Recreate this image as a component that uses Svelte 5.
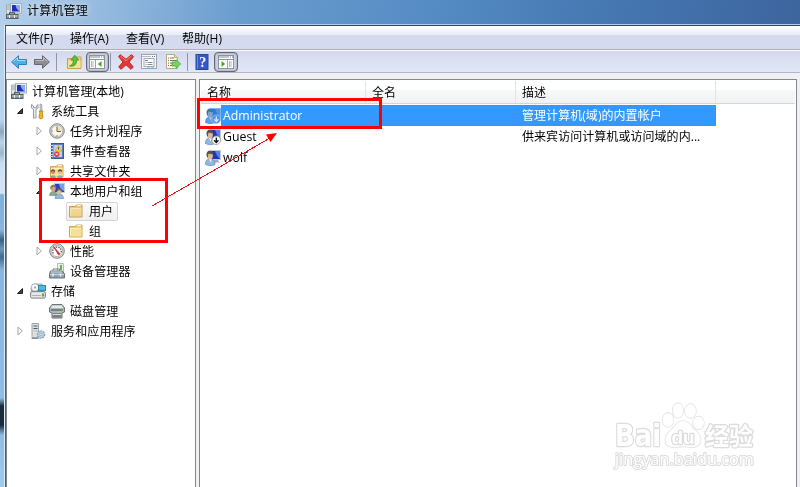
<script>
  const menus = [
    { t: '文件(F)', w: 54 },
    { t: '操作(A)', w: 56 },
    { t: '查看(V)', w: 56 },
    { t: '帮助(H)', w: 60 }
  ];
  const tree = [
    { t: '计算机管理(本地)', i: 'computer', l: 0 },
    { t: '系统工具', i: 'tools', l: 1, e: 'open' },
    { t: '任务计划程序', i: 'clock', l: 2, e: 'shut' },
    { t: '事件查看器', i: 'event', l: 2, e: 'shut' },
    { t: '共享文件夹', i: 'share', l: 2, e: 'shut' },
    { t: '本地用户和组', i: 'users', l: 2, e: 'open' },
    { t: '用户', i: 'folder', l: 3, sel: true },
    { t: '组', i: 'folder', l: 3 },
    { t: '性能', i: 'perf', l: 2, e: 'shut' },
    { t: '设备管理器', i: 'device', l: 2 },
    { t: '存储', i: 'storage', l: 1, e: 'open' },
    { t: '磁盘管理', i: 'disk', l: 2 },
    { t: '服务和应用程序', i: 'service', l: 1, e: 'shut' }
  ];
  const rows = [
    { n: 'Administrator', d: '管理计算机(域)的内置帐户', i: 'userdown', sel: true },
    { n: 'Guest', d: '供来宾访问计算机或访问域的内...', i: 'userdown' },
    { n: 'wolf', d: '', i: 'user' }
  ];
</script>

{#snippet person(sel)}
  <rect x="5" y=".5" width="10.500" height="9" fill={sel ? '#2f78dc' : '#1b35c4'} stroke={sel ? '#7db2ee' : '#c3c9d2'} />
  <path d="M10 1h5v7.500c-2-1-4-4-5-7.500z" fill={sel ? '#4c93ea' : '#5b7cf0'} />
  <path d="M9 10h4l1.500 2.500H8z" fill={sel ? '#6ba4e4' : '#a4abb4'} />
  <path d="M0.500 14.500c0-4 1.500-5.500 4.500-5.500s5 1.500 5 5.500c-2 1.500-7 1.500-9.500 0z" fill={sel ? '#5c9fe8' : '#8fb8e4'} stroke={sel ? '#3f7fc8' : '#4d7db8'} stroke-width=".6" />
  <path d="M3.500 8.500h3.200l-.8 4z" fill={sel ? '#b4c9e4' : '#f6efe6'} />
  <ellipse cx="5" cy="5.500" rx="2.900" ry="3.900" fill={sel ? '#83a5cb' : '#dfb790'} />
  <path d="M1.700 6C1 2 3 .6 5 .8c2.500 0 3.300 1.700 3 3.500C6 4.500 4 3.200 3.300 4.200 3 5 3.200 7 2.500 8z" fill={sel ? '#3f74ad' : '#5a5145'} />
{/snippet}

{#snippet icon(name, sel = false)}
  <svg class="icon" width="16" height="16" viewBox="0 0 16 16">
    {#if name === 'computer'}
      <rect x="4.500" y=".5" width="11" height="9.500" fill="#e6e9ee" stroke="#a9b1bc" />
      <rect x="6" y="2" width="8" height="6.500" fill="#1a2fbe" />
      <path d="M9.500 2H14v6.500c-2.500-1-4-3.500-4.500-6.500z" fill="#8aa8f4" />
      <path d="M.5 2h3.500v9H.5z" fill="#e3e6e9" stroke="#98a1a8" stroke-width=".8" />
      <path d="M1 4h2.500M1 6h2.500" stroke="#9ba2a8" />
      <path d="M8 10.500h4.500l1 1.500H8z" fill="#bac1c6" />
      <path d="M3.500 11.500V9.700h5v1.800" fill="none" stroke="#3d464a" />
      <rect x=".5" y="11.500" width="11.500" height="4" fill="#7d898f" stroke="#566268" />
      <path d="M1 13h11" stroke="#c3ccd0" /><path d="M3.500 12v3M8.500 12v3" stroke="#eef1f2" />
    {:else if name === 'tools'}
      <path d="M1.500 1.500v3.500l2 1.500V15h2.500V6.500L8 5V1.500L6.300 3v1.700H3.500V3z" fill="#e9ecee" stroke="#8b9399" stroke-width=".9" />
      <path d="M10 1l1.800.5v6h-1.500z" fill="#d3d9dd" stroke="#868f95" stroke-width=".7" />
      <path d="M9.200 8h3.800l-.8 2 .8 4-1 1.700H9.800L8.900 14l1-4z" fill="#f4b91d" stroke="#b97a08" stroke-width=".8" />
    {:else if name === 'clock'}
      <circle cx="8" cy="8" r="7.300" fill="#c9ccce" stroke="#7d8286" stroke-width=".9" />
      <circle cx="8" cy="8" r="5.600" fill="#fdf7e4" stroke="#a4a7aa" stroke-width=".7" />
      <path d="M8 8V2.500A5.500 5.500 0 0 1 13.500 8z" fill="#f6dfae" />
      <path d="M8 3.500V8.500h4" fill="none" stroke="#5b5f63" />
      <path d="M3 8h1M8 12v1" stroke="#888" />
    {:else if name === 'event'}
      <rect x="2.500" y=".5" width="12" height="15" fill="#5d7fbb" stroke="#3a5a92" />
      <rect x="4.500" y="2" width="8.500" height="12" fill="#bccce6" />
      <path d="M1 2.500h3M1 5.500h3M1 8.500h3M1 11.500h3M1 13.500h3" stroke="#d1d8e4" />
      <path d="M9.500 2.500l3.300 5.500H6.200z" fill="#ffd93e" stroke="#c79c18" stroke-width=".6" />
      <path d="M9.500 4.300v2.200" stroke="#444" />
      <circle cx="7.700" cy="11.200" r="2.700" fill="#d94540" />
      <path d="M6.700 10.200l2 2m0-2l-2 2" stroke="#fff" stroke-width=".9" />
    {:else if name === 'folder' || name === 'share'}
      <path d="M1.500 3.500h6l1-1.500h5.500v12H1.500z" fill="#f0cd78" stroke="#cfa652" />
      <path d="M9 2.500h4" stroke="#fff5d0" />
      <path d="M2 5h11.500v8.500H2z" fill="#f9df95" />
      <path d="M2.500 5.500h10.500M2.500 5.500V13" fill="none" stroke="#fff0bb" />
      {#if name === 'share'}
        <path d="M1 15.500c0-4.500 6-4.500 6 0z" fill="#78b0a0" /><circle cx="4" cy="9" r="2.100" fill="#c98d5c" />
        <path d="M1.700 9c0-3.600 4.600-3.600 4.600 0L4 7.800z" fill="#6b4d38" />
        <path d="M8 15.500c0-4.500 6-4.500 6 0z" fill="#70b3cc" /><circle cx="11" cy="9" r="2.100" fill="#e3b68c" />
        <path d="M8.700 9c0-3.600 4.600-3.600 4.600 0L11 7.800z" fill="#4f463e" />
      {/if}
    {:else if name === 'users'}
      <rect x="5.500" y=".5" width="10" height="9" fill="#263ed0" stroke="#c3cad8" />
      <path d="M10 1h5v7c-3-1-4.500-4-5-7z" fill="#7c9cf4" />
      <path d="M.5 12.500c0-5.500 7-5.500 8 0z" fill="#86aa8b" stroke="#5f8271" stroke-width=".5" />
      <ellipse cx="4.300" cy="5" rx="2.500" ry="3.300" fill="#d3a177" />
      <path d="M1.300 6.500C.3.500 8 .5 7.300 5L4 3.500z" fill="#8a7358" />
      <path d="M6 15.500c0-6.500 8-6.500 8.700 0z" fill="#8fbbe0" stroke="#4b7ea8" stroke-width=".5" />
      <ellipse cx="10.300" cy="8.300" rx="2.300" ry="3" fill="#e5b98f" />
      <path d="M7.500 9C6.700 3.800 13.500 3.800 13 8.500L10 6.700z" fill="#665a4b" />
    {:else if name === 'perf'}
      <circle cx="8" cy="8" r="7.300" fill="#dadada" stroke="#74797b" stroke-width=".9" />
      <circle cx="8" cy="8" r="5.600" fill="#fff" stroke="#999" stroke-width=".6" />
      <path d="M4.300 10.500A4.300 4.300 0 1 1 11.700 10.500" fill="none" stroke="#59666a" stroke-width="1.400" stroke-dasharray="1.500 1" />
      <path d="M4.500 3.500l5 8.500 1.500-1z" fill="#e82924" stroke="#c9211c" stroke-width=".7" />
    {:else if name === 'device'}
      <path d="M8.500 .5h6v8h-6z" fill="#edf0ee" stroke="#b5bcb8" /><path d="M12 2v5" stroke="#5fb350" stroke-width="2" />
      <path d="M4 7.500V6h6.500v1.500" fill="none" stroke="#6d7d89" />
      <path d="M1.500 8h12l2 3v4H.5v-4z" fill="#8fa1ad" stroke="#647581" />
      <path d="M2 9h11M1 11.500h14" stroke="#ccd7dd" /><path d="M4 10.500v3M11.500 10.500v3" stroke="#eef3f6" stroke-width="1.500" />
    {:else if name === 'storage'}
      <path d="M1 5l3-4h8l3 4v3H1z" fill="#d0d5d6" stroke="#8f9597" stroke-width=".7" />
      <circle cx="5" cy="4.500" r="3.800" fill="#f2f5f5" stroke="#909b9d" stroke-width=".7" /><circle cx="5" cy="4.500" r="1" fill="#8ba0a6" />
      <rect x="8.500" y="2.500" width="7" height="5" fill="#4bb8e8" stroke="#2e88ae" />
      <rect x=".6" y="8.600" width="14.800" height="6.500" rx="1.500" fill="#e5e7e6" stroke="#777d7e" />
      <path d="M2 12.500h9" stroke="#aeb3b3" /><rect x="12" y="10.500" width="2" height="3" fill="#43b528" />
    {:else if name === 'disk'}
      <path d="M.5 5L3 1.500h10L15.500 5v4L13 10v5H3v-5L.5 9z" fill="#b1b6b7" stroke="#6b7273" />
      <path d="M3 2.500h10l1 2.500H2z" fill="#e6e9e9" /><path d="M2 7h10" stroke="#62696a" stroke-width="1.400" />
      <rect x="12" y="6" width="2" height="2" fill="#47b72d" />
      <path d="M4 10h8v4.500H4z" fill="#7b8182" /><path d="M4 11.500h8" stroke="#dce1e2" />
    {:else if name === 'service'}
      <path d="M2 .5h6.500v14H2z" fill="#dce0e2" stroke="#9ca3a7" />
      <path d="M3.500 3h4M3.500 5.500h4" stroke="#4f585c" /><path d="M3.500 8h4" stroke="#b0b7ba" />
      <path d="M1.500 15.500h7" stroke="#868f94" />
      <circle cx="11" cy="11.500" r="3.500" fill="#a8c2d7" stroke="#7c9db7" stroke-width="1.600" stroke-dasharray="1.600 1" />
      <circle cx="11" cy="11.500" r="3" fill="#b9d0e2" /><circle cx="11" cy="11.500" r="1.200" fill="#fff" stroke="#7190a6" stroke-width=".6" />
    {:else if name === 'userdown'}
      {@render person(sel)}
      <circle cx="11.300" cy="11.200" r="4.300" fill={sel ? '#4a92dd' : '#fff'} stroke={sel ? '#a4c8f0' : '#8d8d8d'} stroke-width=".8" />
      <path d="M11.300 8.500v5M9.100 11.300l2.200 2.200 2.200-2.200" fill="none" stroke={sel ? '#d7eaff' : '#111'} stroke-width="1.300" />
    {:else if name === 'user'}
      {@render person(sel)}
    {:else if name === 'back' || name === 'forward'}
      {@const b = name === 'back'}
      <g transform={b ? '' : 'translate(16 0) scale(-1 1)'}>
        <path d="M.6 8L7.500 1.700V5.500h8v5h-8v3.800z" fill={b ? '#45b2ee' : '#8d8f93'} stroke={b ? '#2a80bb' : '#66686c'} />
        <path d="M2.300 7.500L6.500 3.700V6.500h8" fill="none" stroke={b ? '#a3e1fc' : '#bcbec1'} />
      </g>
    {:else if name === 'up'}
      <path d="M1.500 4.500h5l1-1.500H15v11.500H1.500z" fill="#f2ce72" stroke="#cba04a" />
      <path d="M2 7h12.500v7H2z" fill="#f9e09a" />
      <path d="M3.500 12c3-1 4-3 3.800-6H5l3.800-4.800L12.500 6h-2c.5 4-2 7-7 6z" fill="#5bc43c" stroke="#35912a" stroke-width=".8" />
    {:else if name === 'paneleft' || name === 'paneright'}
      <rect x=".5" y="1.500" width="15" height="13" fill="#fff" stroke="#8a939c" />
      <path d="M1 3h10" stroke="#7f8993" /><path d="M12 3h3" stroke="#68737e" stroke-dasharray="1 1" />
      <path d="M1 5.500h14" stroke="#8a939c" />
      {#if name === 'paneleft'}
        <path d="M6.500 6v8" stroke="#9aa3ac" /><path d="M2 8h3M2 10h3M2 12h3" stroke="#68737e" stroke-dasharray="1 .5" />
        <path d="M12.500 7v6L8.800 10z" fill="#3dab2b" />
      {:else}
        <path d="M9.500 6v8" stroke="#9aa3ac" /><path d="M11 8h3M11 10h3M11 12h3" stroke="#68737e" stroke-dasharray="1 .5" />
        <path d="M3.500 7v6L7.200 10z" fill="#3dab2b" />
      {/if}
    {:else if name === 'delete'}
      <path d="M2.200.7L8 5.300 13.500.7l2 2L11 8l4.300 5-2.300 2.300L8 10.800 3 15.300.7 13 5 8 .7 2.700z" fill="#e53a35" stroke="#b52424" />
      <path d="M2.500 2l5.500 4.700L13.300 2" fill="none" stroke="#ff857a" />
    {:else if name === 'props'}
      <rect x=".5" y=".5" width="15" height="14" fill="#f9fafb" stroke="#9aa3ab" />
      <path d="M1 2.500h9" stroke="#b3bac2" /><path d="M11 2.500h4" stroke="#66717b" stroke-dasharray="1 1" />
      <rect x="3" y="4.500" width="10" height="8" fill="#fff" stroke="#a2abb4" />
      <path d="M4 6.500h3" stroke="#727d87" /><path d="M4.500 8.500h1m1 0h5M4.500 10.500h1m1 0h5" stroke="#84909a" />
      <path d="M6 14h3m1 0h3" stroke="#3ebfea" />
    {:else if name === 'export'}
      <path d="M1.500.5h8l3 3v11h-11z" fill="#fffbe6" stroke="#b5aa82" />
      <path d="M9.500.5v3h3" fill="#eee2ad" stroke="#b5aa82" />
      <path d="M3 4h1m1 0h4M3 6.500h1m1 0h6M3 9h1m1 0h3M3 11.500h1m1 0h3" stroke="#75746d" />
      <path d="M7 8h4V5.700L15.700 10 11 14.200V12H7z" fill="#78d758" stroke="#4aa838" stroke-width=".8" />
    {:else if name === 'help'}
      <rect x="2" y=".5" width="12" height="15" fill="#3459ca" stroke="#2a459c" />
      <path d="M3.500 1v14" stroke="#6d8ce0" />
      <text x="8.800" y="13" text-anchor="middle" class="q">?</text>
    {/if}
  </svg>
{/snippet}

<main>
  <header>{@render icon('computer')}<span>计算机管理</span></header>
  <div class="shell">
    <div class="glass"></div>
    <section class="window">
      <nav>
        {#each menus as m}<span style:width="{m.w}px">{m.t}</span>{/each}
      </nav>
      <div class="toolbar">
        <span class="tool arrow">{@render icon('back')}</span>
        <span class="tool fwd">{@render icon('forward')}</span>
        <i></i>
        <span class="tool up">{@render icon('up')}</span>
        <span class="tool pressed">{@render icon('paneleft')}</span>
        <i class="tight"></i>
        <span class="tool">{@render icon('delete')}</span>
        <span class="tool">{@render icon('props')}</span>
        <span class="tool">{@render icon('export')}</span>
        <i class="last"></i>
        <span class="tool help">{@render icon('help')}</span>
        <span class="tool pressed">{@render icon('paneright')}</span>
      </div>
      <div class="body">
        <aside>
          {#each tree as n}
            <div class="node l{n.l}">
              <span class="exp">
                {#if n.e}
                  <svg width="8" height="10" viewBox="0 0 8 10">
                    {#if n.e === 'open'}<path d="M6.500 2.500v5h-5z" fill="#404040" stroke="#222" />
                    {:else}<path d="M2 1L6.300 5 2 9z" fill="#fff" stroke="#a6a6a6" />{/if}
                  </svg>
                {/if}
              </span>
              {@render icon(n.i)}
              <span class="label" class:sel={n.sel}>{n.t}</span>
            </div>
          {/each}
        </aside>
        <div class="list">
          <div class="head"><span>名称</span><span>全名</span><span>描述</span><span></span></div>
          {#each rows as r}
            <div class="row" class:chosen={r.sel}>
              <div class="ic">{@render icon(r.i, r.sel)}</div>
              <div class="cells"><span class="name">{r.n}</span><span class="desc">{r.d}</span></div>
            </div>
          {/each}
        </div>
      </div>
    </section>
  </div>

  <svg class="notes" width="800" height="487" viewBox="0 0 800 487">
    <rect x="40.500" y="179.500" width="126" height="62" />
    <rect x="198.500" y="99.500" width="182" height="28" />
    <path d="M152 206L270 138" class="thin" shape-rendering="crispEdges" />
    <path d="M277 133l-6.500 9-4.500-7.500z" class="tip" />
  </svg>

  <svg class="mark" width="150" height="76" viewBox="0 0 150 76">
    <g class="outline">
      <text x="2" y="45" class="brand" textLength="46" lengthAdjust="spacingAndGlyphs">Bai</text>
      <g class="paw">
        <ellipse cx="55" cy="19" rx="5.500" ry="7" /><ellipse cx="65" cy="9.500" rx="5.300" ry="7.300" />
        <ellipse cx="77.500" cy="10" rx="5.500" ry="7" /><ellipse cx="85.500" cy="22" rx="5.500" ry="6.500" />
        <path d="M70 20c7 0 9 7 13 10 7 6 6 15-2 16-4 .5-7-.5-11-.5s-7 1-11 .5c-8-1-9-10-2-16 4-3 6-10 13-10z" />
      </g>
      <text x="58.500" y="43" class="du" textLength="23" lengthAdjust="spacingAndGlyphs">du</text>
      <text x="92" y="44" class="cn">经验</text>
      <text x="2" y="64" class="url" textLength="139" lengthAdjust="spacingAndGlyphs">jingyan.baidu.com</text>
    </g>
  </svg>
</main>

<style>
  main {
    position: relative; width: 800px; height: 487px; overflow: hidden;
    display: flex; flex-direction: column;
    font: 12px/20px "Open Sans", "Noto Sans CJK SC", sans-serif; color: #000;
  }
  span { white-space: nowrap; }
  .icon { display: block; flex: none; overflow: visible; }
  header {
    box-sizing: border-box; height: 25px; flex: none; display: flex; align-items: center; gap: 5px; padding: 0 0 2px 6px;
    border-bottom: 1px solid #b6cce3;
    background: linear-gradient(100deg, #b6d1ea 0, #92b8de 14%, #6a9dcf 30%, #548bc3 55%, #4678b2 75%, #3d659e 100%);
  }
  header span { letter-spacing: .2px; text-shadow: 0 0 5px #fff8, 0 0 8px #fff6; }
  .shell { flex: 1; display: flex; min-height: 0; }
  .glass {
    width: 4px; flex: none; border-right: 1px solid #dcecf8;
    background: linear-gradient(180deg, #b4d0ea 0, #b9d5ee 95px, #8ea6bd 107px, #bcd5ea 117px, #9db4c9 128px, #c9dff1 138px, #d3e5f4 168px, #7fb0dd 170px, #86b5e0 205px, #3c5f84 215px, #6b96c0 224px, #45698f 232px, #86b5e0 245px, #8ebde7 373px, #1c2b3a 381px, #1c2b3a 400px, #8dbde8 410px, #a0c9ee 100%);
  }
  .window { flex: 1; min-width: 0; display: flex; flex-direction: column; background: #f0f0f0; border-left: 1px solid #4c5b6d; border-top: 1px solid #2f4562; }
  nav {
    box-sizing: border-box; height: 24px; flex: none; display: flex; padding: 3px 0 0 10px; border-bottom: 1px solid #b0b0b4;
    background: linear-gradient(180deg, #fff 0, #e6ebf5 9px, #d4daed 9px, #d5dbee 100%);
  }
  nav span { flex: none; }
  .toolbar {
    box-sizing: border-box; height: 23px; flex: none; display: flex; align-items: center; padding: 1px 0 0 5px;
    border-top: 1px solid #fafafc; border-bottom: 1px solid #b1b9c9;
    background: linear-gradient(180deg, #d3d9ec, #e3e8f8);
  }
  .tool { box-sizing: border-box; width: 23.500px; height: 20px; display: flex; align-items: center; justify-content: center; flex: none; }
  .arrow { width: 16px; } .fwd { width: 16px; margin-left: 7px; }
  .toolbar i { width: 1px; height: 18px; background: #8e97a7; margin: 0 5px 0 6px; }
  .toolbar i.tight { margin: 0 3px 0 1px; }
  .toolbar i.last { margin: 0 3px 0 2px; }
  .pressed { border: 1.500px solid #626975; border-radius: 4px; background: #cdd2df; box-shadow: inset 0 0 2px #7b8290; }
  .body { flex: 1; min-height: 0; display: flex; gap: 3px; padding: 6px 3px 0 0; }
  aside { box-sizing: border-box; width: 190px; flex: none; background: #fff; border: 1px solid #828790; border-bottom: 0; padding-top: 1px; }
  .node { height: 20px; display: flex; align-items: center; }
  .l0 { padding-left: 4px; } .l1 { padding-left: 9px; } .l2 { padding-left: 28px; } .l3 { padding-left: 47px; }
  .exp { width: 8px; height: 10px; margin-right: 6px; display: flex; flex: none; }
  .l0 .exp { width: 0; margin: 0; }
  .label { line-height: 18px; letter-spacing: .1px; margin-left: 5px; padding-top: 1px; }
  .sel { position: relative; }
  .sel::before { content: ''; position: absolute; left: -23px; right: -5px; top: 0; bottom: 0; border: 1px solid #d4d4d4; border-radius: 2px; background: linear-gradient(#f8f8f899, #e5e5e599); mix-blend-mode: multiply; }
  .list { box-sizing: border-box; flex: 1; min-width: 0; background: #fff; border: 1px solid #828790; border-bottom: 0; padding: 1px 1px 0 1px; }
  .head { box-sizing: border-box; height: 23px; display: flex; border-bottom: 1px solid #d5d5d5; background: linear-gradient(#fff 0 9px, #f7f8fa 9px, #f1f2f4); margin-bottom: 1px; }
  .head span { box-sizing: border-box; width: 150px; flex: none; border-right: 1px solid #e0e2e5; padding-left: 6px; line-height: 24px; }
  .head span:first-child { width: 165px; }
  .head span:nth-child(3) { width: 200px; }
  .head span:last-child { border: 0; width: 60px; }
  .row { height: 21px; display: flex; align-items: center; }
  .ic { width: 20px; padding-left: 4px; box-sizing: border-box; flex: none; }
  .cells { box-sizing: border-box; width: 495px; height: 21px; display: flex; line-height: 20px; border: 1px dotted transparent; }
  .chosen .cells { background: #3399ff; border-color: #c07330; color: #fff; }
  .name { width: 300px; padding-left: 1px; box-sizing: border-box; font-size: 12.300px; flex: none; }
  .desc { letter-spacing: .05px; }
  .notes { position: absolute; inset: 0; pointer-events: none; }
  .notes rect { fill: none; stroke: #f00; stroke-width: 3; }
  .thin { stroke: #e4141a; stroke-width: 1; fill: none; }
  .tip { fill: #f00; }
  .q { font: bold 14px "Liberation Serif", serif; fill: #fff; }
  .mark { position: absolute; left: 613px; top: 401px; }
  .outline { fill: #fff; stroke: #dcdcdc; stroke-width: 2.600; stroke-linejoin: round; paint-order: stroke; }
  .paw { stroke-width: 1.300; }
  .brand { font: bold 30px "DejaVu Sans", sans-serif; }
  .du { font: bold 19px "Liberation Sans", sans-serif; }
  .cn { font: bold 24px "Noto Sans CJK SC", sans-serif; }
  .url { font: 16px "Open Sans", sans-serif; stroke-width: 2; }
</style>
